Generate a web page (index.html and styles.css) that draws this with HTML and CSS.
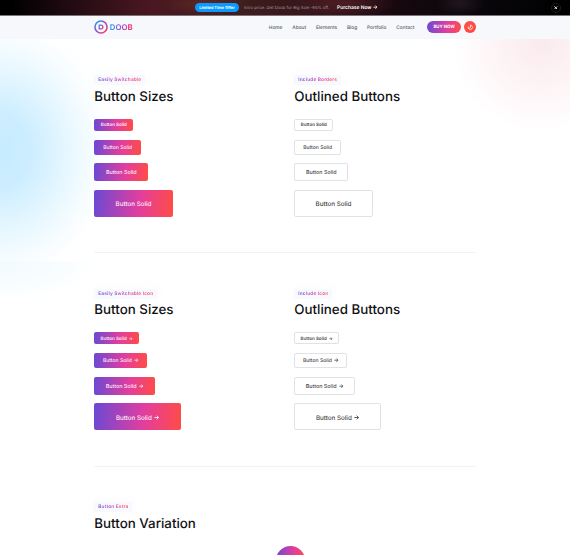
FILE: index.html
```html
<!DOCTYPE html>
<html lang="en">
<head>
<meta charset="utf-8">
<title>Doob Buttons</title>
<link rel="stylesheet" href="styles.css">
</head>
<body>
<svg class="defs" width="0" height="0" aria-hidden="true">
  <linearGradient id="brand" x1="0" y1="0" x2="1" y2="1"><stop offset="0" stop-color="#20a0f5"/><stop offset=".5" stop-color="#9a4bc4"/><stop offset="1" stop-color="#ff4060"/></linearGradient>
  <symbol id="arrow" viewBox="0 0 12 12"><path d="M1 6h10M6.5 1.5L11 6l-4.500 4.500" fill="none" stroke="currentColor" stroke-width="2.200"/></symbol>
</svg>
<div class="topbar">
  <span class="offer">Limited Time Offer</span>
  <span class="intro">Intro price. Get Doob for Big Sale -95% off.</span>
  <a class="purchase">Purchase Now <svg class="arrow"><use href="#arrow"/></svg></a>
  <span class="close"><svg viewBox="0 0 10 10"><path d="M1 1l8 8M9 1L1 9" stroke="#fff" stroke-width="2.400"/></svg></span>
</div>
<header class="header">
  <div class="container bar">
    <a class="logo">
      <svg viewBox="0 0 28 28"><circle cx="14" cy="14" r="12.100" fill="none" stroke="url(#brand)" stroke-width="3.200"/><path d="M10.500 10.300h3.600a3.700 3.700 0 0 1 0 7.400h-3.600z" fill="none" stroke="url(#brand)" stroke-width="2.600"/></svg>
      <span>DOOB</span>
    </a>
    <nav class="nav"><a>Home</a><a>About</a><a>Elements</a><a>Blog</a><a>Portfolio</a><a>Contact</a></nav>
    <a class="buy">BUY NOW</a>
    <span class="flame"><svg viewBox="0 0 24 24"><path d="M13 3c4 2 7 5 7 10a8 8 0 0 1-15 3c3 1 7-1 8-5 .500-3 0-5 0-8zM5 16c-1-3-1-5 1-7" fill="none" stroke="#fff" stroke-width="2.800"/></svg></span>
  </div>
</header>
<main class="main">
  <section class="container section">
    <div class="col">
      <span class="badge b1"><b>Easily Switchable</b></span>
      <h2>Button Sizes</h2>
      <div class="stack">
        <a class="btn sm">Button Solid</a><a class="btn md">Button Solid</a><a class="btn lg">Button Solid</a><a class="btn xl">Button Solid</a>
      </div>
    </div>
    <div class="col">
      <span class="badge b2"><b>Include Borders</b></span>
      <h2>Outlined Buttons</h2>
      <div class="stack outlined">
        <a class="btn sm">Button Solid</a><a class="btn md">Button Solid</a><a class="btn lg">Button Solid</a><a class="btn xl">Button Solid</a>
      </div>
    </div>
  </section>
  <section class="container section">
    <div class="col">
      <span class="badge b3"><b>Easily Switchable Icon</b></span>
      <h2>Button Sizes</h2>
      <div class="stack icons">
        <a class="btn sm">Button Solid<svg class="arrow"><use href="#arrow"/></svg></a><a class="btn md">Button Solid<svg class="arrow"><use href="#arrow"/></svg></a><a class="btn lg">Button Solid<svg class="arrow"><use href="#arrow"/></svg></a><a class="btn xl">Button Solid<svg class="arrow"><use href="#arrow"/></svg></a>
      </div>
    </div>
    <div class="col">
      <span class="badge b4"><b>Include Icon</b></span>
      <h2>Outlined Buttons</h2>
      <div class="stack icons outlined">
        <a class="btn sm">Button Solid<svg class="arrow"><use href="#arrow"/></svg></a><a class="btn md">Button Solid<svg class="arrow"><use href="#arrow"/></svg></a><a class="btn lg">Button Solid<svg class="arrow"><use href="#arrow"/></svg></a><a class="btn xl">Button Solid<svg class="arrow"><use href="#arrow"/></svg></a>
      </div>
    </div>
  </section>
  <section class="container section last">
    <div class="col">
      <span class="badge b5"><b>Button Extra</b></span>
      <h2>Button Variation</h2>
    </div>
    <span class="round"></span>
  </section>
</main>
</body>
</html>
```
FILE: styles.css
```css
* { box-sizing: border-box; }
body { margin: 0; height: 555px; overflow: hidden; background: #fff; font-family: Inter, "Liberation Sans", sans-serif; color: #101014; text-rendering: geometricPrecision; }
.defs { position: absolute; }
.container { width: 382px; margin: 0 auto; position: relative; left: .3px; }
svg { display: block; flex: none; }

.topbar {
  position: relative; height: 15.500px; display: flex; align-items: center; padding-left: 195px; color: #fff; white-space: nowrap;
  border-bottom: 1px solid #77757a;
  background:
    radial-gradient(ellipse 45px 12px at 205px 4px, #80402f66, transparent),
    radial-gradient(ellipse 50px 14px at 345px 3px, #7a2f3566, transparent),
    radial-gradient(ellipse 25px 14px at 460px 3px, #3d303866, transparent),
    linear-gradient(90deg, #000 2%, #240b13 13%, #4a1721 26%, #3d1d1e 42%, #35131a 58%, #16080e 70%, #08060a 85%, #000);
}
.offer { width: 44px; height: 9px; line-height: 10px; border-radius: 5px; background: #0a99ff; text-align: center; font-size: 3.950px; font-weight: 700; }
.intro { width: 84px; margin-left: 5px; padding-top: 1.600px; font-size: 4.200px; color: #a39a9d; }
.purchase { display: flex; align-items: center; gap: 1.500px; margin-left: 9px; font-size: 4.950px; font-weight: 600; padding-top: 1.500px; }
.arrow { width: 4.400px; height: 4.400px; margin-top: -.800px; }
.close { position: absolute; right: 9px; top: 2.500px; width: 10px; height: 10px; border: 1px solid #1c1c1e; border-radius: 50%; display: grid; place-items: center; }
.close svg { width: 3.600px; height: 3.600px; }

.header { height: 23.500px; background: #f6f8fb; }
.bar { height: 100%; display: flex; align-items: center; }
.logo { display: flex; align-items: center; gap: 1.500px; font: 700 7.800px/10px Inter, sans-serif; }
.logo svg { width: 14px; height: 14px; }
.logo span { margin-top: -.600px; background: linear-gradient(90deg, #20a5fa, #a14cc4 50%, #ff4060); background-clip: text; color: transparent; }
.nav { display: flex; gap: 9.750px; margin-left: auto; padding-top: .700px; font-size: 4.850px; font-weight: 500; color: #5c5d62; }
.buy { width: 34.500px; height: 12px; line-height: 13.600px; margin: 0 3px 0 12.300px; border-radius: 6px; text-align: center; color: #fff; font-size: 4.350px; font-weight: 700; background: linear-gradient(95deg, #6a49d4, #e33e9d 60%, #ff4c45); }
.flame { width: 12px; height: 12px; border-radius: 50%; background: #ff4b42; display: grid; place-items: center; }
.flame svg { width: 6.500px; height: 6.500px; }

.main {
  height: 516px; overflow: hidden;
  background:
    radial-gradient(circle 90px at 542px 3px, #faeaed, #fdf3f5 45%, #fff0),
    radial-gradient(ellipse 112px 132px at 0 112px, #c6ecff 0, #ccedff 27%, #e6f7ff 60%, #f8fdff 85%, #fff0) 0 0 / 570px 222px no-repeat,
    radial-gradient(ellipse 100px 40px at 0 0, #f1fafe 0, #f8fdff 60%, #fff0) 0 222px / 570px 60px no-repeat;
}
.section { height: 213.500px; padding-top: 36px; display: flex; }
.section:not(.last)::after { content: ""; position: absolute; left: 0; right: 0; top: 213px; height: 1px; background: #f3f3f4; }
.col { width: 200px; flex: none; }
.badge { display: block; height: 10px; line-height: 11px; padding-left: 4px; border-radius: 1px; background: #f6faff; box-shadow: 0 0 8px 4px #fafafb66; font-size: 4.800px; white-space: nowrap; }
.badge b { display: inline-block; font-weight: 600; background: linear-gradient(90deg, #7654d5, #dc49aa 60%, #ff555f); background-clip: text; color: transparent; letter-spacing: .150px; }
.b1 { width: 50.500px; } .b2 { width: 46.500px; } .b3 { width: 62.500px; } .b4 { width: 38px; } .b5 { width: 38px; }
h2 { margin: 3.700px 0 0; font-size: 13.350px; line-height: 17px; font-weight: 545; white-space: nowrap; }
.stack { display: flex; flex-direction: column; align-items: flex-start; gap: 8.700px; margin-top: 13.200px; }
.btn { display: flex; align-items: center; justify-content: center; gap: 2.500px; padding-top: 1.600px; border-radius: 2px; color: #ffe9f8; white-space: nowrap; background: linear-gradient(95deg, #6a49d4, #e33e9d 58%, #ff4c45); }
.sm { width: 39px; height: 12px; font-size: 4.500px; font-weight: 600; }
.md { width: 46.700px; height: 15px; font-size: 5.050px; font-weight: 500; }
.lg { width: 54px; height: 18px; font-size: 5.350px; font-weight: 500; }
.xl { width: 78.500px; height: 27px; font-size: 6.250px; font-weight: 500; }
.icons .sm { width: 44.700px; } .icons .md { width: 53.200px; } .icons .lg { width: 60.700px; } .icons .xl { width: 86.600px; }
.outlined .btn { background: #fff; border: 1px solid #e2e2e4; color: #48484c; }
.btn .arrow { margin-top: -1.600px; }
.sm .arrow { width: 3.500px; height: 3.500px; }
.btn.xl .arrow { width: 5px; height: 5px; margin-top: -.400px; }
.round { position: absolute; left: 182.200px; top: 80px; width: 29px; height: 29px; border-radius: 50%; background: linear-gradient(95deg, #6a49d4, #e33e9d 58%, #ff4c45); }
```
